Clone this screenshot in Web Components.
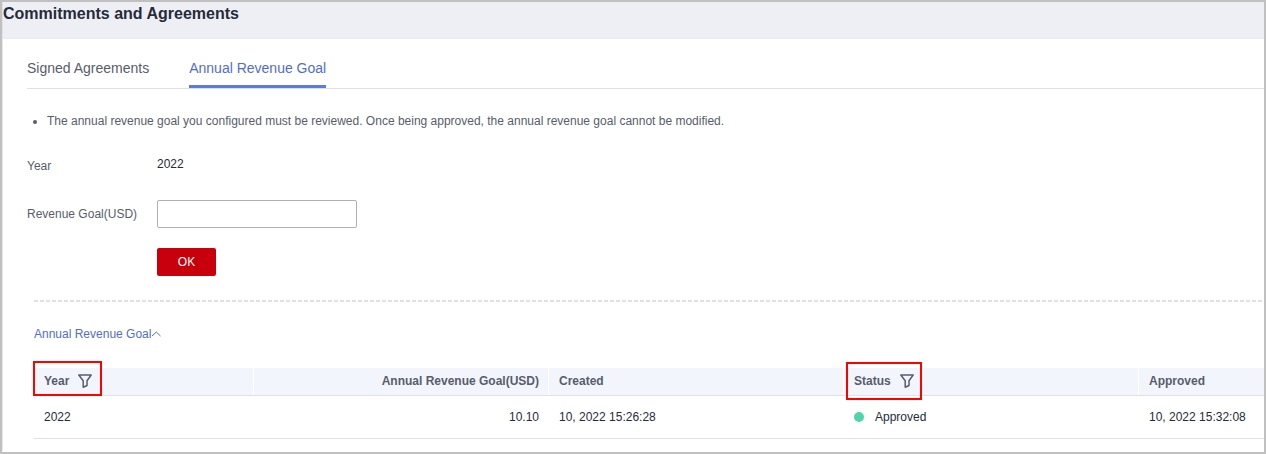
<!DOCTYPE html>
<html lang="en">
<head>
<meta charset="utf-8">
<title>Commitments and Agreements</title>
<style>
html, body { margin: 0; min-height: 100%; }
body { font: 12px/20px "Liberation Sans", Arial, sans-serif; color: #252b3a; background: #fff; }
</style>
</head>
<body>
<agreement-page heading="Commitments and Agreements">
  <tab-bar slot="tabs"></tab-bar>
  <goal-form></goal-form>
  <goal-history></goal-history>
</agreement-page>

<template id="page-tpl">
  <style>
    :host { display: block; box-sizing: border-box; min-height: 100vh; border: 2px solid #c0c0c0; overflow: hidden; }
    header { height: 37px; box-sizing: border-box; border-bottom: 1px solid #e8e8ee; background: #eeeff5; border-left: 1px solid #e3e4ea; }
    h1 { margin: 0; font-size: 16px; line-height: 24px; font-weight: bold; }
    main { border-left: 1px solid #e8e9ef; padding: 17px 0 12px 24px; }
  </style>
  <header><h1></h1></header>
  <main><slot name="tabs"></slot><slot></slot></main>
</template>

<template id="tabs-tpl">
  <style>
    :host { display: block; }
    nav { display: flex; gap: 40px; border-bottom: 1px solid #dfe1e6; }
    a { color: #575d6c; font-size: 14px; line-height: 24px; padding-bottom: 5px; border-bottom: 3px solid transparent; text-decoration: none; }
    a[aria-current] { color: #526ecc; border-color: #5e7ce0; }
  </style>
  <nav><a href="#signed">Signed Agreements</a><a href="#goal" aria-current="page">Annual Revenue Goal</a></nav>
</template>

<template id="form-tpl">
  <style>
    :host { display: block; color: #575d6c; }
    ul { margin: 22px 0 21px; padding-left: 20px; }
    form { display: grid; grid-template-columns: 110px 200px; column-gap: 20px; row-gap: 20px; align-items: center; }
    label { line-height: 28px; white-space: nowrap; }
    output { color: #252b3a; line-height: 24px; align-self: start; }
    input { box-sizing: border-box; width: 100%; height: 28px; border: 1px solid #adb0b8; border-radius: 2px; padding: 0 8px; font: inherit; background: #fff; }
    button { grid-column: 2; justify-self: start; width: 59px; height: 28px; padding: 0; border: 0; border-radius: 2px; background: #c7000b; color: #fff; font: inherit; }
  </style>
  <ul><li>The annual revenue goal you configured must be reviewed. Once being approved, the annual revenue goal cannot be modified.</li></ul>
  <form>
    <label for="year">Year</label><output id="year">2022</output>
    <label for="goal">Revenue Goal(USD)</label><input id="goal" type="text">
    <button type="button">OK</button>
  </form>
</template>

<template id="history-tpl">
  <style>
    :host { display: block; margin: 24px 0 0 7px; }
    .rule { height: 2px; background: repeating-linear-gradient(90deg, #dfe1e6 0 4px, #fff 4px 6px); }
    .toggle { display: flex; align-items: center; width: max-content; margin-top: 22px; color: #526ecc; text-decoration: none; }
    table { width: 100%; margin-top: 24px; border-collapse: separate; border-spacing: 0; table-layout: fixed; }
    col.year { width: 220px; }
    col.wide { width: 295px; }
    th, td { padding: 0 10px; text-align: left; border-bottom: 1px solid #dfe1e6; white-space: nowrap; }
    th { height: 25px; padding-bottom: 2px; background: #f2f5fc; color: #575d6c; box-shadow: inset -1px 0 #fff; }
    th:last-child { box-shadow: none; }
    td { height: 42px; }
    .num { text-align: right; }
    .head { position: relative; display: flex; align-items: center; gap: 9px; width: max-content; }
    .head::before { content: ""; position: absolute; inset: -10px -10px -5px -11px; border: 2px solid #f00; }
    .status-head::before { inset: -9px -8px -9px -8px; }
    .status { display: flex; align-items: center; gap: 11px; }
    .status::before { content: ""; width: 10px; height: 10px; border-radius: 50%; background: #50d4ab; }
  </style>
  <div class="rule"></div>
  <a class="toggle" href="#history">Annual Revenue Goal<svg width="10" height="10" viewBox="0 0 10 10" fill="none" stroke="currentColor"><path d="M1 7 5.300 3 9.500 7"/></svg></a>
  <table>
    <colgroup><col class="year"><col class="wide"><col class="wide"><col class="wide"><col></colgroup>
    <thead><tr>
      <th><span class="head">Year<filter-icon></filter-icon></span></th>
      <th class="num">Annual Revenue Goal(USD)</th>
      <th>Created</th>
      <th><span class="head status-head">Status<filter-icon></filter-icon></span></th>
      <th>Approved</th>
    </tr></thead>
    <tbody><tr>
      <td>2022</td><td class="num">10.10</td><td>10, 2022 15:26:28</td>
      <td><span class="status">Approved</span></td><td>10, 2022 15:32:08</td>
    </tr></tbody>
  </table>
</template>

<template id="filter-tpl">
  <style>:host { display: block; width: 14px; height: 14px; } svg { display: block; }</style>
  <svg width="14" height="14" viewBox="0 0 14 14" fill="none" stroke="#575d6c" stroke-width="1.500" stroke-linejoin="round"><path d="M.8 1H13.200L9 6.800V11.500L5.200 13.200V6.800Z"/></svg>
</template>

<script>
const define = (name, id, setup) => customElements.define(name, class extends HTMLElement {
  constructor() {
    super();
    this.attachShadow({ mode: "open" }).append(document.getElementById(id).content.cloneNode(true));
  }
  connectedCallback() { if (setup) setup(this); }
});
define("filter-icon", "filter-tpl");
define("tab-bar", "tabs-tpl");
define("goal-form", "form-tpl");
define("goal-history", "history-tpl");
define("agreement-page", "page-tpl", el => {
  el.shadowRoot.querySelector("h1").textContent = el.getAttribute("heading");
});
</script>
</body>
</html>
